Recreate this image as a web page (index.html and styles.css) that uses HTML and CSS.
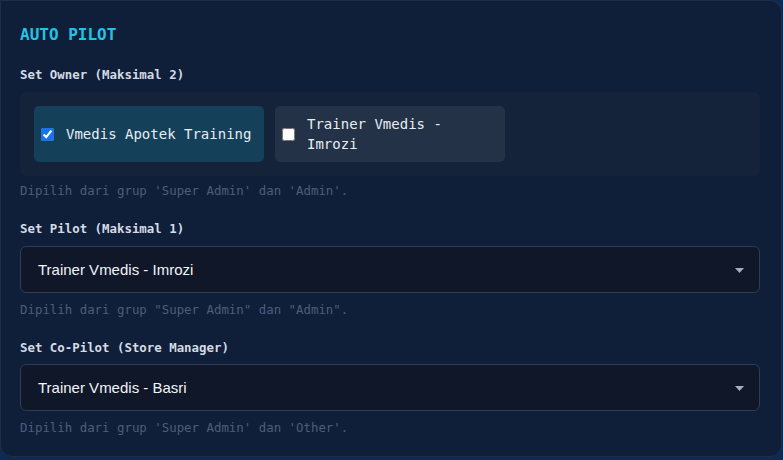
FILE: index.html
```html
<!DOCTYPE html>
<html lang="id">
<head>
<meta charset="utf-8">
<title>Auto Pilot</title>
<link rel="stylesheet" href="styles.css">
</head>
<body>
<section class="card">
  <h2 class="title">AUTO PILOT</h2>

  <div class="label">Set Owner (Maksimal 2)</div>
  <div class="owner-box">
    <label class="chip chip-on"><input type="checkbox" checked><span>Vmedis Apotek Training</span></label>
    <label class="chip"><input type="checkbox"><span>Trainer Vmedis - Imrozi</span></label>
  </div>
  <div class="help help-box">Dipilih dari grup 'Super Admin' dan 'Admin'.</div>

  <div class="label label-gap">Set Pilot (Maksimal 1)</div>
  <div class="select">
    <span>Trainer Vmedis - Imrozi</span>
    <svg class="caret" width="9" height="5" viewBox="0 0 9 5"><path d="M0 0H9L4.5 5Z" fill="#a3afc2"/></svg>
  </div>
  <div class="help">Dipilih dari grup "Super Admin" dan "Admin".</div>

  <div class="label label-gap">Set Co-Pilot (Store Manager)</div>
  <div class="select select-last">
    <span>Trainer Vmedis - Basri</span>
    <svg class="caret" width="9" height="5" viewBox="0 0 9 5"><path d="M0 0H9L4.5 5Z" fill="#a3afc2"/></svg>
  </div>
  <div class="help">Dipilih dari grup 'Super Admin' dan 'Other'.</div>
</section>
</body>
</html>
```

FILE: styles.css
```css
html, body {
  margin: 0;
  padding: 0;
}
body {
  width: 783px;
  height: 460px;
  background: #0d2a53;
  font-family: "DejaVu Sans Mono", "Liberation Mono", monospace;
  overflow: hidden;
}
.card {
  box-sizing: border-box;
  width: 782px;
  height: 457px;
  background: #0f1f3a;
  border: 1px solid #1e2e4a;
  border-radius: 0 12px 12px 12px;
  padding: 22px 21px 0 19px;
}
.title {
  margin: 0;
  font-size: 16px;
  line-height: 24px;
  font-weight: bold;
  color: #22c4e6;
}
.label {
  margin-top: 20px;
  font-size: 12.4px;
  line-height: 16px;
  font-weight: bold;
  color: #d5dbe5;
  margin-bottom: 9px;
}
.label-gap {
  margin-top: 22px;
}
.owner-box {
  display: flex;
  gap: 11px;
  padding: 14px;
  background: #15233a;
  border-radius: 6px;
}
.chip {
  box-sizing: border-box;
  width: 230px;
  min-height: 56px;
  display: flex;
  align-items: center;
  gap: 12px;
  padding: 8px 8px 8px 7px;
  border-radius: 5px;
  background: #243247;
  color: #e8edf3;
  font-size: 14px;
  line-height: 20px;
}
.chip-on {
  background: #15405a;
}
.chip input {
  flex: none;
  width: 13px;
  height: 13px;
  margin: 0;
  accent-color: #1a73e8;
}
.help {
  margin-top: 9px;
  font-size: 12.4px;
  line-height: 16px;
  color: #4d5d78;
}
.help-box {
  margin-top: 7px;
}
.select {
  box-sizing: border-box;
  height: 47px;
  display: flex;
  align-items: center;
  justify-content: space-between;
  padding: 0 15px 0 17px;
  background: #0f1729;
  border: 1px solid #2f3c53;
  border-radius: 6px;
  font-family: "Liberation Sans", Arial, sans-serif;
  font-size: 15px;
  color: #f1f4f8;
}
.select-last {
  margin-top: -1px;
}
.caret {
  margin-top: 1px;
}
```
